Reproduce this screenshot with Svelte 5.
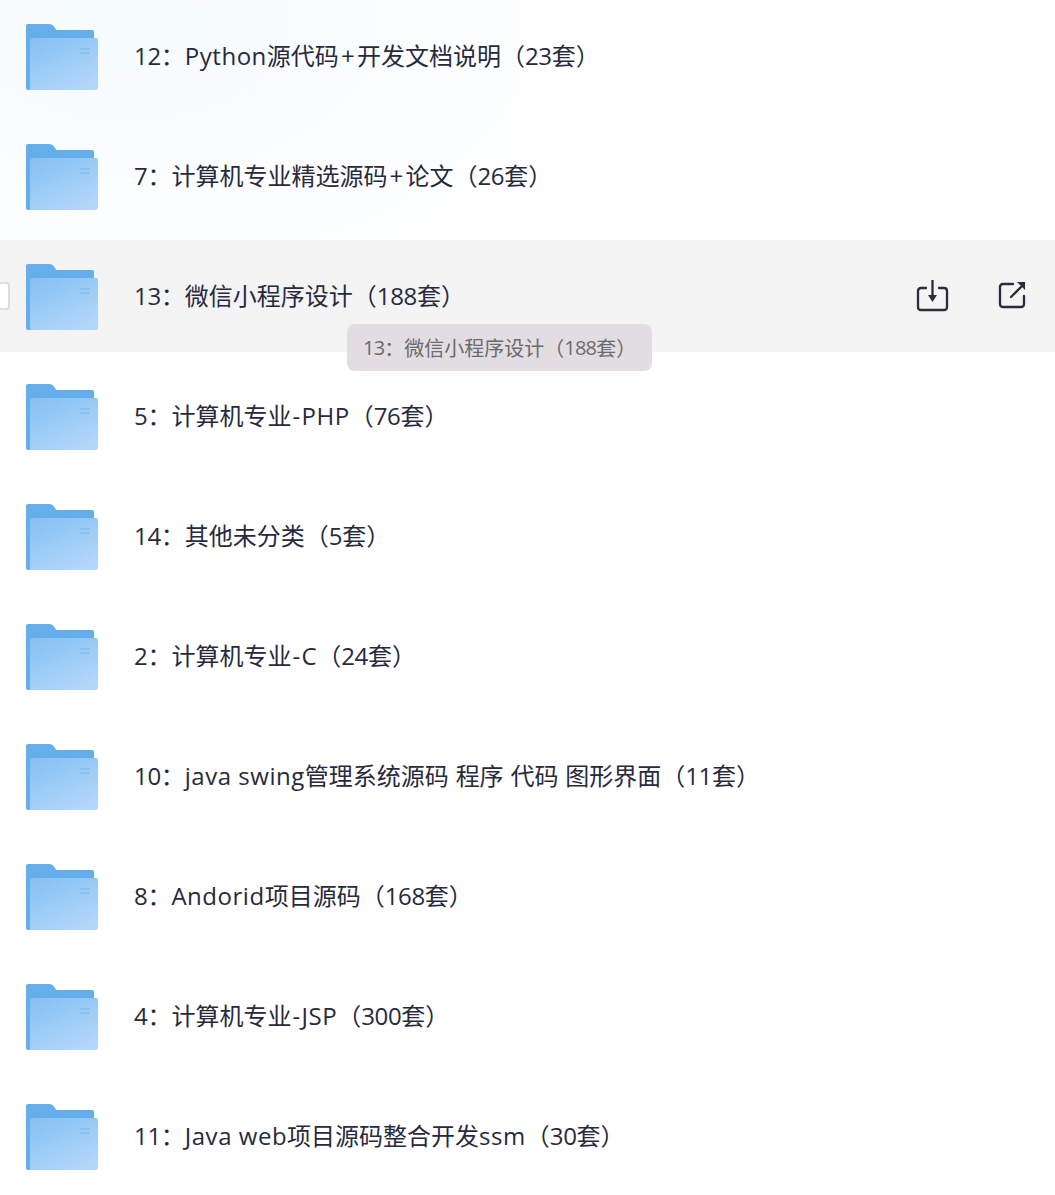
<script>
  const rows = [
    '12：Python源代码+开发文档说明（23套）',
    '7：计算机专业精选源码+论文（26套）',
    '13：微信小程序设计（188套）',
    '5：计算机专业-PHP（76套）',
    '14：其他未分类（5套）',
    '2：计算机专业-C（24套）',
    '10：java swing管理系统源码 程序 代码 图形界面（11套）',
    '8：Andorid项目源码（168套）',
    '4：计算机专业-JSP（300套）',
    '11：Java web项目源码整合开发ssm（30套）'
  ];

  function kind(t) {
    if (/^\d/.test(t)) return 'num';
    if (t === '+') return 'plus';
    if (t === '-') return 'dash';
    if (/^[A-Za-z ]/.test(t)) return 'latin';
    return 'cjk';
  }

  function tokens(s) {
    return s.split(/(\d+|\+|-|[A-Za-z ]+)/).filter(Boolean).map((text) => ({ text, kind: kind(text) }));
  }
</script>

{#snippet label(name)}
  {#each tokens(name) as t}<span class={t.kind}>{t.text}</span>{/each}
{/snippet}

<div class="page">
  <div class="glow"></div>
  <ul class="list">
    {#each rows as name, i}
      <li class="row" class:hover={i === 2}>
        {#if i === 2}<span class="check"></span>{/if}
        <svg class="folder" viewBox="0 0 72 66" width="72" height="66" aria-hidden="true">
          <defs>
            <linearGradient id="front{i}" x1="0.1" y1="0" x2="0.7" y2="1">
              <stop offset="0" stop-color="#86c0f2"/>
              <stop offset="1" stop-color="#b2d7fa"/>
            </linearGradient>
          </defs>
          <path d="M2 0H23Q26 0 27.500 2L30.500 6H66Q68 6 68 8V30H4V66H2Q0 66 0 64V2Q0 0 2 0Z" fill="#64aeec"/>
          <path d="M4 17Q4 14 7 14H70Q72 14 72 16V63Q72 66 69 66H4Z" fill="url(#front{i})"/>
          <rect x="54" y="24" width="10" height="2" fill="#8ac2f1"/>
          <rect x="54" y="28" width="10" height="2" fill="#8ac2f1"/>
        </svg>
        <span class="name">{@render label(name)}</span>
        {#if i === 2}
          <div class="actions">
            <svg viewBox="0 0 34 32" width="34" height="32" fill="none" stroke="#2b2d3a" stroke-width="2.300" aria-hidden="true">
              <path d="M10 8H5Q2 8 2 11V27Q2 30 5 30H28Q31 30 31 27V11Q31 8 28 8H23" stroke-linecap="round"/>
              <path d="M16.500 0V16"/>
              <path d="M12 15H21L16.500 22Z" fill="#2b2d3a" stroke="none"/>
            </svg>
            <svg viewBox="0 0 30 32" width="30" height="32" fill="none" stroke="#2b2d3a" stroke-width="2.300" aria-hidden="true">
              <path d="M15 4H5Q2 4 2 7V24Q2 27 5 27H23Q26 27 26 24V16" stroke-linecap="round"/>
              <path d="M13 17L23 7" stroke-linecap="round"/>
              <path d="M19 2H27V10Z" fill="#2b2d3a" stroke="none"/>
            </svg>
          </div>
          <div class="tooltip">{@render label(name)}</div>
        {/if}
      </li>
    {/each}
  </ul>
</div>

<style>
  :global(body) {
    margin: 0;
    background: #fff;
  }
  .page {
    position: relative;
    width: 1055px;
    height: 1195px;
    overflow: hidden;
    background: #fff;
    font-family: "Open Sans", "Noto Sans CJK SC", sans-serif;
  }
  .glow {
    position: absolute;
    left: 0;
    top: 0;
    width: 520px;
    height: 260px;
    background: radial-gradient(ellipse at 25% 10%, #f6fbfe 0%, #fbfdff 50%, #ffffff 100%);
  }
  .list {
    position: relative;
    list-style: none;
    margin: 0;
    padding: 0;
    display: flex;
    flex-direction: column;
    gap: 8px;
  }
  .row {
    position: relative;
    height: 112px;
    display: flex;
    align-items: center;
    padding-left: 26px;
    color: #272a3d;
    font-size: 24px;
  }
  .row.hover {
    background: #f4f4f5;
  }
  .folder {
    flex: none;
    margin-right: 36px;
    margin-top: 2px;
  }
  .name {
    white-space: pre;
    padding-bottom: 3px;
  }
  .num {
    letter-spacing: -0.014em;
  }
  .latin {
    letter-spacing: 0.022em;
  }
  .plus {
    padding: 0 0.09em;
  }
  .dash {
    padding: 0 0.05em;
  }
  .check {
    position: absolute;
    left: -18px;
    top: 42px;
    width: 28px;
    height: 28px;
    box-sizing: border-box;
    background: #fff;
    border: 2px solid #dcdcdd;
    border-radius: 4px;
  }
  .actions {
    margin-left: auto;
    margin-right: 27px;
    display: flex;
    gap: 48px;
    align-items: center;
  }
  .tooltip {
    position: absolute;
    left: 347px;
    top: 84px;
    height: 47px;
    padding: 0 16px;
    display: flex;
    align-items: center;
    background: #e2dde1;
    border-radius: 8px;
    color: #6a6a70;
    font-size: 20px;
    white-space: pre;
    z-index: 2;
  }
  .tooltip .num {
    letter-spacing: -0.04em;
  }
</style>
